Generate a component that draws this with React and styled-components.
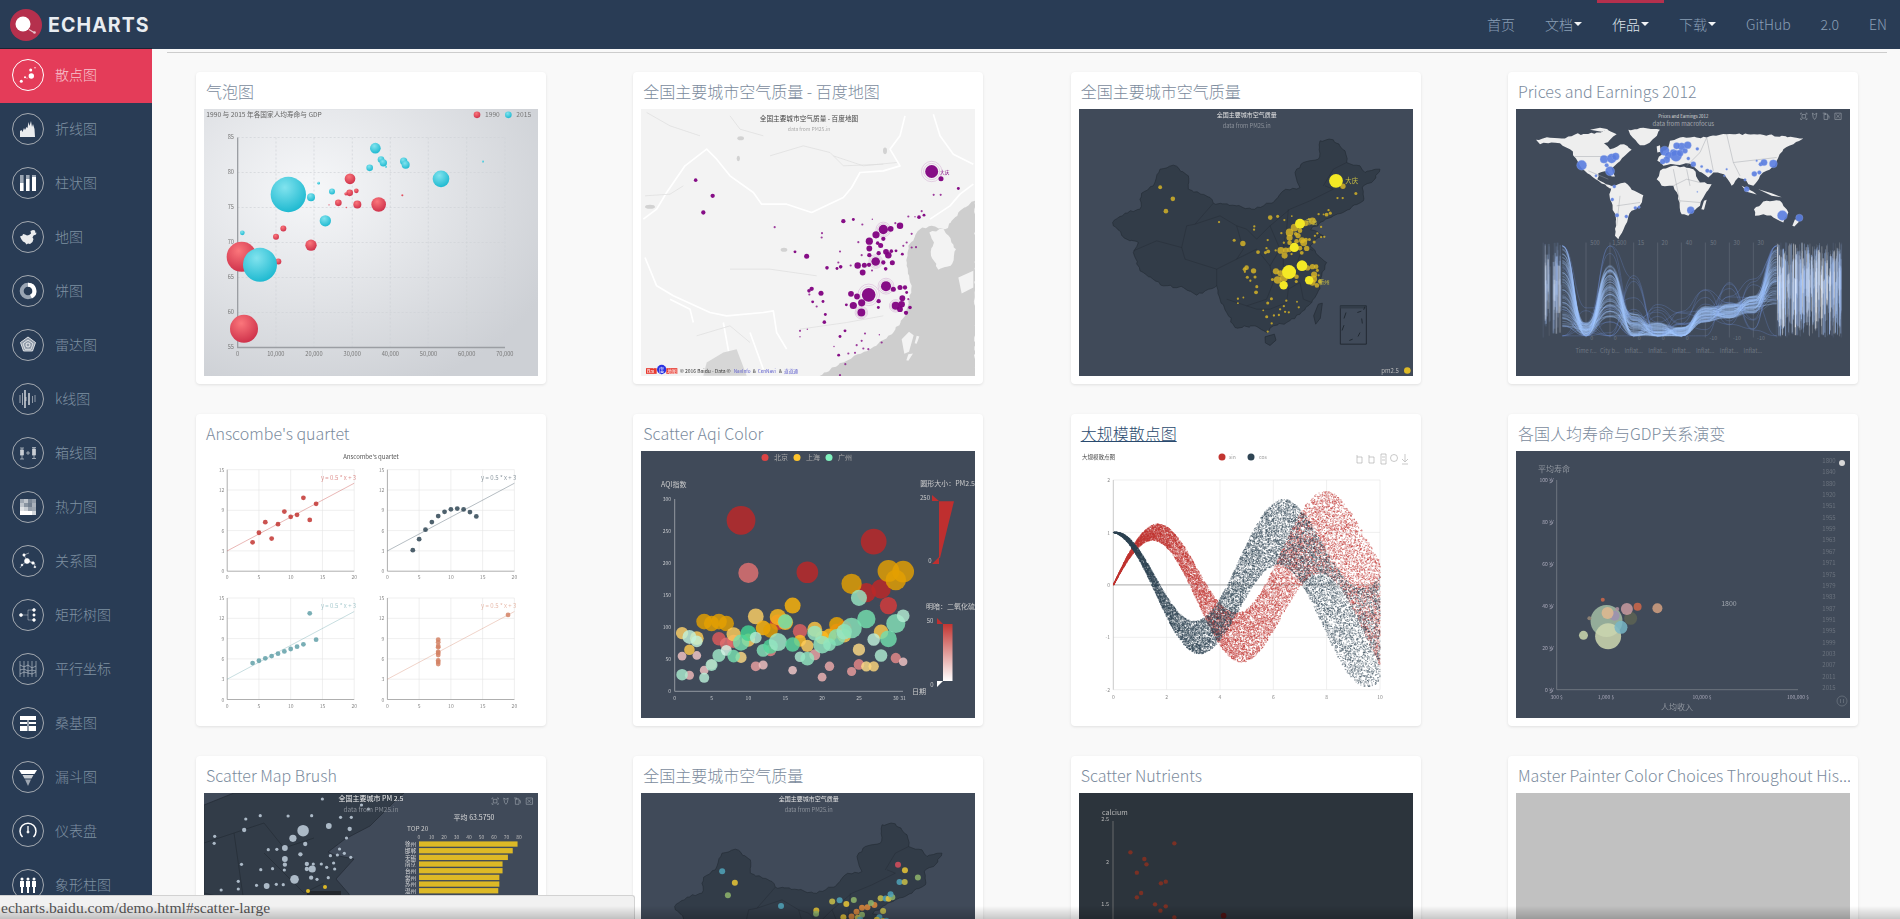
import React from "react";
import styled, { createGlobalStyle } from "styled-components";

const GlobalStyle = createGlobalStyle`
  html, body {
    margin: 0;
    height: 100%;
    overflow: hidden;
    background: #f9f9f9;
    font-family: "Noto Sans CJK SC", "Noto Sans", sans-serif;
  }
`;

const Page = styled.div`
  height: 100vh;
  display: flex;
  flex-direction: column;
  overflow: hidden;
`;

const Navbar = styled.header`
  flex: 0 0 49px;
  display: flex;
  align-items: stretch;
  justify-content: space-between;
  background: #293c55;
`;

const Logo = styled.div`
  display: flex;
  align-items: center;
  gap: 6px;
  padding-left: 10px;
`;

const LogoText = styled.span`
  font-family: "Inter", "Liberation Sans", sans-serif;
  font-size: 19.5px;
  font-weight: 700;
  letter-spacing: 1.1px;
  color: #e9edf1;
`;

const NavLinks = styled.nav`
  display: flex;
`;

const NavLink = styled.a`
  box-sizing: border-box;
  display: flex;
  align-items: center;
  gap: 1px;
  padding: 0 15px 4px;
  height: 49px;
  border-top: 3px solid ${(p) => (p.$active ? "#b5304d" : "transparent")};
  font-size: 14px;
  font-weight: 300;
  color: ${(p) => (p.$active ? "#dfe5eb" : "#8a9fb5")};
  &:last-child {
    padding-right: 13px;
  }
`;

const Caret = styled.i`
  width: 0;
  height: 0;
  border-left: 4px solid transparent;
  border-right: 4px solid transparent;
  border-top: 4px solid #f2f4f6;
`;

const Body = styled.div`
  flex: 1;
  display: flex;
  min-height: 0;
`;

const Sidebar = styled.aside`
  flex: 0 0 152px;
  margin-top: -1px;
  border-top: 1px solid #1b2533;
  background: #293c55;
  overflow: hidden;
`;

const SideItem = styled.div`
  box-sizing: border-box;
  height: 54px;
  display: flex;
  align-items: center;
  gap: 11px;
  padding: 0 0 2px 12px;
  background: ${(p) => (p.$active ? "#e43c59" : "transparent")};
  color: ${(p) => (p.$active ? "#f7c6d0" : "#7f91a2")};
  font-size: 14px;
  font-weight: 300;
`;

const SideLabel = styled.span`
  margin-bottom: 2px;
`;

const IconRing = styled.span`
  box-sizing: border-box;
  width: 32px;
  height: 32px;
  border-radius: 50%;
  border: 1px solid ${(p) => (p.$active ? "#fff" : "#a3a9b0")};
  flex: none;
  svg {
    display: block;
    margin: -1px;
    width: 32px;
    height: 32px;
  }
`;

const Main = styled.main`
  flex: 1;
  min-width: 0;
  overflow: hidden;
`;

const Rule = styled.hr`
  margin: 3px 13px 0 15px;
  border: 0;
  height: 1px;
  background: #cdcdcd;
`;

const Grid = styled.div`
  display: grid;
  grid-template-columns: repeat(4, 350px);
  column-gap: 87.33px;
  row-gap: 30px;
  padding: 19px 0 0 44px;
`;

const Card = styled.article`
  box-sizing: border-box;
  width: 350px;
  height: 312px;
  padding: 0 8px;
  background: #fff;
  border-radius: 4px;
  box-shadow: 0 1px 3px rgba(0, 0, 0, 0.1);
`;

const CardTitle = styled.h3`
  margin: 0;
  height: 37px;
  line-height: 38px;
  padding-left: 2px;
  font-size: 16px;
  font-weight: 300;
  color: ${(p) => (p.$hover ? "#2a4a6e" : "#7b8b9d")};
  text-decoration: ${(p) => (p.$hover ? "underline" : "none")};
  white-space: nowrap;
  overflow: hidden;
`;

// the gallery pictures are scaled-down thumbnails, so they read a little soft
const ChartSvg = styled.svg`
  display: block;
  width: 334px;
  height: 267px;
  background: ${(p) => p.$bg || "#404a59"};
  filter: blur(0.35px);
`;

const Label = styled.text`
  font-family: "Noto Sans CJK SC", "Noto Sans", sans-serif;
  font-size: ${(p) => p.$size || 6}px;
  fill: ${(p) => p.$fill || "#ccc"};
  text-anchor: ${(p) => p.$anchor || "start"};
`;

const StatusBubble = styled.div`
  position: fixed;
  left: 0;
  bottom: 0;
  z-index: 3;
  box-sizing: border-box;
  width: 635px;
  height: 24px;
  padding-left: 1px;
  line-height: 23px;
  font-family: "Liberation Serif", serif;
  font-size: 15.6px;
  color: #555;
  background: #f1f1f1;
  border: 1px solid #d2d2d2;
  border-width: 1px 1px 0 0;
  border-top-right-radius: 3px;
`;

const BottomFade = styled.div`
  position: fixed;
  left: 0;
  right: 0;
  bottom: 0;
  z-index: 4;
  height: 13px;
  pointer-events: none;
  background: linear-gradient(to bottom, rgba(0, 0, 0, 0), rgba(0, 0, 0, 0.2));
`;

// small deterministic random so the picture is the same every load
const seeded = (seed) => () => {
  seed = (seed * 1664525 + 1013904223) % 4294967296;
  return seed / 4294967296;
};

// breaks up a hand traced outline so coasts don't look like straight cuts
const rough = (outline, amp, seed) => {
  const rnd = seeded(seed);
  const nums = outline.match(/-?\d+(\.\d+)?/g).map(Number);
  let d = "";
  for (let i = 0; i < nums.length; i += 2) {
    const x = nums[i];
    const y = nums[i + 1];
    const nx = nums[(i + 2) % nums.length];
    const ny = nums[(i + 3) % nums.length];
    d += `${i ? "L" : "M"}${x} ${y}`;
    const steps = Math.floor(Math.hypot(nx - x, ny - y) / 9);
    for (let s = 1; s < steps; s++) {
      const t = s / steps;
      d += `L${(x + (nx - x) * t + (rnd() - 0.5) * amp).toFixed(1)} ${(y + (ny - y) * t + (rnd() - 0.5) * amp).toFixed(1)}`;
    }
  }
  return d + "Z";
};

/* ---------- sidebar icons, 32x32 ---------- */

const W = "#fff";

const sideIcons = {
  scatter: (
    <g fill={W}>
      <circle cx="19.3" cy="17" r="2.7" />
      <circle cx="18.7" cy="11" r="1.5" />
      <circle cx="23" cy="8.7" r="0.7" />
      <circle cx="9.3" cy="22.3" r="1.5" />
      <circle cx="13" cy="18.3" r="1" />
      <circle cx="15" cy="19" r="0.5" />
    </g>
  ),
  line: (
    <path fill={W} opacity="0.9" d="M8 24v-6l1.500-1 1 2 1.500-4 1 2 1.500-3 1 1 1-6 1 4 1.500-5 1 6 1-3 1.500 5 .5 8z" />
  ),
  bar: (
    <g>
      <path fill="#9aa5b3" d="M8 8h3.600v8H8zM14 8h3.600v4H14zM20 8h4v2h-4z" />
      <path fill={W} d="M8 16h3.600v8H8zM14 12h3.600v12H14zM20 10h4v14h-4z" />
    </g>
  ),
  map: (
    <path fill={W} opacity="0.9" d="M8 15.500l2.500-1 .5-1.500 2 .5 2 1 2-.5 2-1.500-.5-2.500 2.500-1 2 .5.500 2.500 1-.5-.5 2-2.500 1-1 2 1 1.500-1 3-2.500 2-2-.5-1.500 1-1.500-2-2-1-1.500-2z" />
  ),
  pie: (
    <g fill="none" strokeWidth="4">
      <circle cx="16" cy="16" r="6.300" stroke="#9aa5b3" />
      <path stroke={W} d="M16 9.700a6.300 6.300 0 0 1 3 11.900" />
    </g>
  ),
  radar: (
    <g fill="none" stroke={W}>
      <path fill="#8f9aa8" strokeWidth="0.8" d="M16 8l7.500 5.500-3 8.500h-9l-3-8.500z" />
      <path strokeWidth="0.7" d="M16 11l5 3.700-2 5.600h-6l-2-5.600z" />
      <circle cx="16" cy="16" r="2" strokeWidth="0.8" />
    </g>
  ),
  k: (
    <g stroke={W} strokeWidth="0.8">
      <path d="M8 12v8M10.500 10v12M14 14v4" opacity="0.7" />
      <path d="M13 7v18" strokeWidth="1.200" />
      <path d="M17 10v12" strokeWidth="1.200" />
      <path d="M20.500 13v7M23 12v7" opacity="0.6" />
    </g>
  ),
  box: (
    <g fill="#c9ced5" stroke="#c9ced5" strokeWidth="0.7">
      <path fill="none" d="M8 11h4M10 11v11M8 22h4M20 10.500h4M22 10.500v11M20 21.500h4" />
      <rect x="8.500" y="13" width="3" height="5" />
      <rect x="20.500" y="12" width="3" height="6" />
      <path d="M14 16h4M16 14v4" />
    </g>
  ),
  heat: (
    <g fill={W}>
      {[0, 1, 2, 3].map((r) =>
        [0, 1, 2, 3].map((c) => (
          <rect key={`${r}-${c}`} x={8 + c * 4} y={8 + r * 4} width="4" height="4" opacity={[0.55, 0.7, 0.4, 0.5, 0.7, 0.45, 0.35, 0.6, 0.85, 0.75, 0.5, 0.55, 1, 1, 1, 0.8][r * 4 + c]} />
        ))
      )}
    </g>
  ),
  graph: (
    <g fill={W} stroke={W} strokeWidth="0.6">
      <path d="M15 16l-3-6 5-2M15 16l8 3-1 4M15 16l-5 4-2 3M15 16l5 1" fill="none" opacity="0.8" />
      <circle cx="15" cy="16" r="2.500" />
      <circle cx="12" cy="10" r="1.200" />
      <circle cx="21" cy="18" r="1.300" />
      <circle cx="10" cy="20" r="0.900" />
      <circle cx="23" cy="22" r="0.800" />
    </g>
  ),
  tree: (
    <g fill={W} stroke={W} strokeWidth="0.6">
      <path d="M10 16h6M16 11v10M16 11h6M16 21h6" fill="none" opacity="0.6" />
      <circle cx="9" cy="16" r="1.500" />
      <circle cx="22" cy="11" r="1.400" />
      <circle cx="22" cy="16" r="1.200" />
      <circle cx="22" cy="21" r="1.400" />
    </g>
  ),
  parallel: (
    <g stroke="#cfd4da" strokeWidth="0.6" fill="none">
      <path d="M8 8v16M12 8v16M16 8v16M20 8v16M24 8v16" />
      <path d="M8 12l4 2 4-2 4 3 4-2M8 17l4-1 4 2 4-1 4 1M8 21l4-2 4 1 4 1 4-2" />
    </g>
  ),
  sankey: (
    <g fill={W}>
      <path d="M8 9h16v4H8zM8 15h7v2H8zM17 15h7v2h-7zM8 19h7v5H8zM17 19h7v5h-7z" />
      <path d="M15 13h2v11h-2z" opacity="0.5" />
    </g>
  ),
  funnel: (
    <g fill={W}>
      <path d="M7 9h18l-2.500 4h-13z" />
      <path d="M10.500 14h11l-2 3.500h-7z" opacity="0.75" />
      <path d="M13 18.500h6L16 25z" opacity="0.55" />
    </g>
  ),
  gauge: (
    <g fill="none" stroke={W}>
      <path strokeWidth="1.500" d="M10.500 22a8 8 0 1 1 11 0" />
      <path strokeWidth="1.300" d="M16 16v-5" />
      <circle cx="16" cy="17" r="1" fill={W} />
    </g>
  ),
  pictorial: (
    <g fill={W}>
      {[10, 16, 22].map((x) => (
        <g key={x}>
          <circle cx={x} cy="10" r="1.500" />
          <path d={`M${x - 2} 12h4v6h-1v6h-2v-6h-1z`} />
        </g>
      ))}
    </g>
  ),
};

const sideMenu = [
  ["散点图", "scatter"],
  ["折线图", "line"],
  ["柱状图", "bar"],
  ["地图", "map"],
  ["饼图", "pie"],
  ["雷达图", "radar"],
  ["k线图", "k"],
  ["箱线图", "box"],
  ["热力图", "heat"],
  ["关系图", "graph"],
  ["矩形树图", "tree"],
  ["平行坐标", "parallel"],
  ["桑基图", "sankey"],
  ["漏斗图", "funnel"],
  ["仪表盘", "gauge"],
  ["象形柱图", "pictorial"],
];

/* ---------- shared chart bits ---------- */

// city dots, coords taken off the baidu thumbnail at 3x: x, y, r
const cities = [
  [905, 307, 18], [933, 329, 7], [985, 358, 4], [911, 377, 3], [932, 377, 3], [197, 333, 5], [248, 380, 6], [220, 430, 6],
  [434, 474, 3], [640, 456, 6], [670, 451, 4], [697, 466, 3], [727, 450, 2], [760, 481, 13], [782, 479, 8], [810, 470, 9],
  [738, 497, 10], [760, 509, 6], [718, 516, 10], [743, 522, 5], [752, 529, 7], [685, 519, 3], [718, 538, 8], [718, 558, 6],
  [746, 552, 6], [768, 548, 8], [775, 558, 9], [784, 546, 5], [798, 545, 4], [817, 555, 4], [830, 520, 3], [845, 535, 3],
  [737, 577, 12], [683, 589, 9], [703, 588, 7], [717, 587, 6], [760, 580, 6], [787, 581, 7], [698, 610, 8], [767, 599, 5],
  [591, 596, 5], [621, 598, 4], [632, 593, 5], [625, 580, 3], [662, 589, 3], [695, 558, 3], [576, 492, 3], [575, 505, 3],
  [495, 548, 4], [530, 561, 7], [630, 547, 3], [545, 659, 6], [537, 665, 5], [573, 672, 7], [538, 676, 3], [548, 698, 4],
  [560, 712, 3], [579, 697, 4], [716, 677, 19], [768, 651, 14], [663, 674, 8], [681, 682, 8], [695, 701, 10], [670, 709, 10],
  [694, 730, 11], [649, 707, 4], [746, 696, 6], [745, 715, 4], [797, 710, 11], [817, 687, 8], [815, 705, 9], [810, 720, 8],
  [828, 731, 6], [840, 715, 5], [790, 660, 7], [810, 655, 7], [825, 655, 6], [830, 670, 4], [835, 690, 3], [586, 736, 4],
  [583, 759, 5], [645, 785, 4], [630, 802, 4], [705, 793, 3], [748, 797, 2], [755, 820, 3], [695, 815, 3], [680, 828, 3],
  [700, 838, 3], [715, 840, 3], [612, 832, 2], [626, 858, 4], [655, 853, 3], [675, 851, 3], [646, 885, 3], [630, 918, 3],
  [510, 785, 3], [532, 780, 2], [510, 803, 2], [835, 442, 3], [855, 443, 2], [867, 444, 5], [882, 438, 4], [875, 426, 3],
  [845, 494, 3], [858, 534, 3], [820, 530, 3], [796, 462, 3], [726, 604, 3],
];

const toMapX = (x) => 798 + (x - 905) * 0.745;
const toMapY = (y) => 335 + (y - 307) * 0.74;

const chinaOutline = rough(
  "M128 460L165 432 210 420 215 372 250 350 270 300 310 288 355 320 355 360 420 385 430 402 500 410 545 420 610 400 640 365 690 355 675 310 700 280 745 270 750 215 790 212 825 245 830 280 870 290 885 310 930 300 905 340 880 350 880 395 840 420 790 440 750 460 722 482 760 500 735 512 720 530 745 560 770 580 755 620 745 665 725 700 690 735 650 760 610 770 590 790 555 770 495 775 470 730 450 690 440 650 380 678 340 655 280 650 210 605 190 550 205 520 170 510 130 470Z",
  7,
  21
);
const provinceLines =
  "M190 545L260 515 335 535 345 570 440 600 440 650M335 535L350 470 375 465 430 402M375 465L450 440 500 470 530 480M530 480L560 510 600 470 660 420 720 395 790 360 765 350M600 470L630 540 600 590 610 640 590 690 530 710 470 690M440 600L500 570 560 540 600 590M655 420L650 480 640 530 640 590 655 660 690 640 700 690 725 700M640 530L700 530 730 545M655 660L650 700 600 720 560 720 530 710M760 350L790 300 830 280M700 530L680 585 745 600M500 470L520 540 500 570";

const ChinaMap = () => (
  <g>
    <path d={chinaOutline} fill="#323c48" stroke="#222a33" strokeWidth="1.800" />
    <path d={provinceLines} fill="none" stroke="#222a33" strokeWidth="1.300" />
    <path d="M745 705l12-3-6 45-14 18-6-25z" fill="#323c48" stroke="#222a33" strokeWidth="2" />
    <path d="M585 803l28-8 5 18-18 16-14-8z" fill="#323c48" stroke="#222a33" strokeWidth="2" />
    <path d="M811 710h78v115h-78z" fill="none" stroke="#222a33" strokeWidth="3" />
    <path d="M811 710h78v8h-78z" fill="#323c48" />
    <path d="M828 730l-6 18M822 768l-6 16M862 730l12-4M875 748l2 15M870 790l-6 12M848 810l-10 4M885 712l-4 10" stroke="#222a33" strokeWidth="3" />
  </g>
);

const ToolIcons = ({ x, y, s = 1, color = "#aab0b8" }) => (
  <g transform={`translate(${x} ${y}) scale(${s})`} fill="none" stroke={color} strokeWidth="0.6">
    <path d="M0 0h1.500M5.500 0h1.500v1.500M7 5.500V7H5.500M1.500 7H0V5.500M0 1.500V0M1.500 1.500l4 0 0 4-4 0z" />
    <path d="M13 0l2.500 1.500L18 0l-1 5-1.500 2L14 5z" />
    <path d="M26 1h4v6h-4zM24.500 0h3v2M30 3h1.500v3" />
    <path d="M38 0h7v7h-7zM39.500 1.500l4 4M43.500 1.500l-4 4" />
  </g>
);

/* ---------- row 1 ---------- */

const redBubbles = [
  [155, 563, 45], [162, 779, 42], [363, 528, 17], [265, 577, 9], [258, 503, 9], [280, 478, 9], [480, 329, 16], [479, 371, 10],
  [468, 374, 5], [499, 365, 7], [445, 401, 10], [502, 406, 12], [566, 406, 22], [417, 407, 2], [469, 415, 2], [637, 378, 3],
];
const cyanBubbles = [
  [210, 587, 51], [295, 376, 53], [363, 384, 12], [157, 491, 7], [406, 455, 17], [386, 342, 4], [426, 367, 9], [539, 296, 10],
  [556, 237, 16], [573, 271, 10], [580, 281, 11], [588, 293, 3], [641, 276, 11], [647, 287, 12], [753, 329, 25], [879, 277, 3],
];

const BubbleChart = () => (
  <ChartSvg viewBox="42 120 1002 800" $bg="#cdd0d5">
    <defs>
      <radialGradient id="bubbleBg" cx="0.32" cy="0.3" r="0.8">
        <stop offset="0" stopColor="#f6f7f9" />
        <stop offset="1" stopColor="#cdd0d5" />
      </radialGradient>
      <radialGradient id="redBall" cx="0.4" cy="0.3" r="0.75">
        <stop offset="0" stopColor="#fb767b" />
        <stop offset="1" stopColor="#cc2e48" />
      </radialGradient>
      <radialGradient id="cyanBall" cx="0.4" cy="0.3" r="0.75">
        <stop offset="0" stopColor="#81e3ee" />
        <stop offset="1" stopColor="#19b7cf" />
      </radialGradient>
    </defs>
    <rect x="42" y="120" width="1002" height="800" fill="url(#bubbleBg)" />
    <g stroke="#cfd1d6" strokeWidth="2" strokeDasharray="6 6">
      {[205, 310, 415, 520, 625, 730].map((y) => (
        <path key={y} d={`M143 ${y}H945`} />
      ))}
      {[258, 372, 487, 601, 715, 830, 945].map((x) => (
        <path key={x} d={`M${x} 205V835`} />
      ))}
    </g>
    <path d="M143 205V835H945" fill="none" stroke="#9b9ea3" strokeWidth="4" />
    {[85, 80, 75, 70, 65, 60, 55].map((v, i) => (
      <Label key={v} x="132" y={211 + i * 105} $size={17} $fill="#777" $anchor="end">{v}</Label>
    ))}
    {[0, 10000, 20000, 30000, 40000, 50000, 60000, 70000].map((v, i) => (
      <Label key={v} x={143 + i * 114.500} y="862" $size={17} $fill="#777" $anchor="middle">
        {v.toLocaleString("en-US")}
      </Label>
    ))}
    <Label x="49" y="145" $size={20} $fill="#666">1990 与 2015 年各国家人均寿命与 GDP</Label>
    <circle cx="861" cy="137" r="10" fill="url(#redBall)" />
    <Label x="885" y="144" $size={20} $fill="#777">1990</Label>
    <circle cx="955" cy="137" r="10" fill="url(#cyanBall)" />
    <Label x="979" y="144" $size={20} $fill="#777">2015</Label>
    {redBubbles.map(([x, y, r], i) => (
      <circle key={i} cx={x} cy={y} r={r} fill="url(#redBall)" />
    ))}
    {cyanBubbles.map(([x, y, r], i) => (
      <circle key={i} cx={x} cy={y} r={r} fill="url(#cyanBall)" />
    ))}
  </ChartSvg>
);

const baiduWater = rough(
  "M1035 395L985 430 945 480 905 470 870 480 835 530 830 590 845 650 830 730 790 790 720 840 640 880 560 925L1035 925Z",
  7,
  31
);
const baiduKorea = rough("M898 490L940 478 978 540 962 590 925 602 903 560 912 520Z", 7, 33);

const BaiduMap = () => (
  <ChartSvg viewBox="33 120 1002 800" $bg="#f3f3f3">
    <path fill="#cecece" d={baiduWater} />
    <path fill="#f3f3f3" d={baiduKorea} />
    <path fill="#f3f3f3" d="M815 810l22-22 14 10-14 50-14 6zM985 625l45-20v50l-35 18zM860 800l8 2-8 22-6-2zM835 855l14-2-14 22-6-2z" />
    <g fill="none" stroke="#fff" strokeWidth="5" strokeLinejoin="round">
      <path d="M40 450L80 420 110 370 165 290 230 240 260 270 300 320 370 370 395 405 470 405 545 430 640 385 665 355 690 310 760 305 810 290 780 240 810 200 825 140" />
      <path d="M910 135L930 200 970 255 1030 285" />
      <path d="M45 565L80 650 130 680 240 730 290 740 400 730 430 725 440 790 470 840" />
      <path d="M120 690L180 720 190 760M1030 345L990 375 960 410 900 450M280 760L300 870M360 790L400 900" />
    </g>
    <g fill="none" stroke="#dcdcdc" strokeWidth="2">
      <path d="M45 380L120 375 160 350M300 140L330 180 400 200M420 260L520 230 600 250 640 290 760 285M300 600L420 600 560 620M200 800L300 770 360 820M510 780L650 760 760 740M50 130L120 170 210 200M610 260L700 290 800 280" />
    </g>
    <g fill="#d2d2d2">
      <ellipse cx="332" cy="207" rx="10" ry="6" />
      <ellipse cx="60" cy="413" rx="15" ry="6" />
      <ellipse cx="462" cy="542" rx="10" ry="6" />
      <ellipse cx="325" cy="268" rx="5" ry="8" />
      <ellipse cx="765" cy="245" rx="6" ry="10" />
    </g>
    <path d="M230 880L280 850 320 840 350 920H220Z" fill="#d6d6d6" />
    {cities.map(([x, y, r], i) => (
      <g key={i}>
        {r >= 11 && (
          <g fill="none" stroke="#800080" opacity="0.3">
            <circle cx={x} cy={y} r={r * 1.35} strokeWidth="1.500" />
            <circle cx={x} cy={y} r={r * 1.7} strokeWidth="1.500" />
          </g>
        )}
        <circle cx={x} cy={y} r={r * 1.08} fill="#800080" opacity={r < 4 ? 0.75 : 0.95} />
      </g>
    ))}
    <Label x="537" y="157" $size={20} $fill="#444" $anchor="middle">全国主要城市空气质量 - 百度地图</Label>
    <Label x="537" y="187" $size={15} $fill="#aaa" $anchor="middle">data from PM25.in</Label>
    <Label x="930" y="314" $size={14} $fill="#800080">大庆</Label>
    <rect x="48" y="897" width="32" height="17" fill="#e8392f" />
    <Label x="51" y="912" $size={15} $fill="#fff">Bai</Label>
    <circle cx="95" cy="901" r="14" fill="#2932e1" />
    <Label x="95" y="909" $size={16} $fill="#fff" $anchor="middle">度</Label>
    <rect x="109" y="897" width="33" height="17" fill="#e8392f" />
    <Label x="112" y="911" $size={14} $fill="#fff">地图</Label>
    <Label x="149" y="912" $size={15} $fill="#333">© 2016 Baidu - Data ©</Label>
    <Label x="311" y="912" $size={14} $fill="#5c5ccc">NavInfo</Label>
    <Label x="368" y="912" $size={14} $fill="#333">&amp;</Label>
    <Label x="383" y="912" $size={14} $fill="#5c5ccc">CenNavi</Label>
    <Label x="447" y="912" $size={14} $fill="#333">&amp;</Label>
    <Label x="462" y="912" $size={14} $fill="#5c5ccc">道道通</Label>
  </ChartSvg>
);

const AirMap = () => (
  <ChartSvg viewBox="27 120 1002 800">
    <ChinaMap />
    {cities.map(([x, y, r], i) =>
      r >= 11 ? null : (
        <circle key={i} cx={toMapX(x)} cy={toMapY(y)} r={Math.max(2.800, r * 1.15)} fill="#ddb926" opacity="0.8" />
      )
    )}
    {cities
      .filter((c) => c[2] >= 11)
      .map(([x, y, r], i) => (
        <circle key={i} cx={toMapX(x)} cy={toMapY(y)} r={Math.min(21, r * 1.15)} fill="#f4e925" />
      ))}
    <Label x="530" y="143" $size={18} $fill="#e4e4e4" $anchor="middle">全国主要城市空气质量</Label>
    <Label x="530" y="177" $size={17} $fill="#8c929b" $anchor="middle">data from PM25.in</Label>
    <Label x="826" y="342" $size={19} $fill="#c9be42">大庆</Label>
    <Label x="708" y="464" $size={17} $fill="#c9be42">邢台</Label>
    <Label x="745" y="646" $size={17} $fill="#c9be42">衢州</Label>
    <Label x="934" y="911" $size={18} $fill="#bbb">pm2.5</Label>
    <circle cx="1012" cy="904" r="10" fill="#ddb926" />
  </ChartSvg>
);

// parallel lines follow a loose band; a few outliers wander off it
const parallelAxes = [187, 258, 330, 401, 473, 544, 616, 688, 760, 830];
const parallelMean = [650, 782, 665, 770, 785, 790, 735, 725, 705, 620];
const parallelSpread = [125, 20, 80, 38, 26, 16, 24, 22, 26, 85];

const buildParallel = () => {
  const rnd = seeded(42);
  const paths = [];
  for (let n = 0; n < 120; n++) {
    const outlier = n % 10 === 0;
    const pts = parallelAxes.map((x, i) => {
      const spread = parallelSpread[i] * (outlier ? 4 : 1);
      return [x, Math.min(800, Math.max(530, parallelMean[i] + (rnd() - 0.5) * 2 * spread))];
    });
    let d = `M${pts[0][0]} ${pts[0][1]}`;
    for (let i = 1; i < pts.length; i++) {
      const mid = (pts[i][0] + pts[i - 1][0]) / 2;
      d += `C${mid} ${pts[i - 1][1]} ${mid} ${pts[i][1]} ${pts[i][0]} ${pts[i][1]}`;
    }
    paths.push({ d, faint: outlier });
  }
  return paths;
};

const buildStreaks = (x0, x1, count, seed) => {
  const rnd = seeded(seed);
  const out = [];
  for (let i = 0; i < count; i++) {
    const x = x0 + rnd() * (x1 - x0);
    const top = 520 + rnd() * 130;
    out.push({ x, top, bottom: 640 + rnd() * 165, w: 0.8 + rnd() * 2.200, o: 0.2 + rnd() * 0.6 });
  }
  return out;
};

const parallelLines = buildParallel();
const rightStreaks = buildStreaks(832, 1024, 320, 7);
const leftStreaks = [
  ...buildStreaks(133, 150, 24, 11),
  ...buildStreaks(160, 183, 30, 12),
];

const continents = [
  "M108 212L150 206 185 208 225 196 290 190 320 180 350 195 330 212 312 222 330 240 352 232 372 225 395 242 372 262 352 282 335 298 345 322 335 322 322 306 295 312 292 330 318 345 345 357 330 358 295 335 262 312 240 290 228 268 210 240 180 222 145 222 120 225Z",
  "M385 182L430 176 480 182 465 205 440 225 420 228 398 205Z",
  "M335 350L375 340 395 362 430 378 420 408 395 425 375 470 355 510 345 500 348 450 335 400 328 375Z",
  "M480 305L520 290 580 300 600 340 635 345 610 385 600 410 565 440 545 435 535 380 520 350 485 350 470 330Z",
  "M472 275L490 245 505 235 510 215 540 205 570 205 620 205 680 195 780 195 910 208 880 225 850 240 835 265 825 290 800 305 780 320 760 350 745 345 735 330 715 325 695 350 672 315 640 310 625 325 590 300 575 285 520 285 490 290Z",
  "M762 420L800 395 840 395 865 430 850 460 820 445 790 435 765 440Z",
].map((d, i) => rough(d, 6, 50 + i));

const smallLand =
  "M612 395l8-3-8 30-8-2zM470 232l10-4 2 20-10 2zM725 350l35 18 10 8-30-8zM775 360l40 12 30 12-30-4zM812 265l6 4-6 22-16 10-4-6zM885 450l12 8-14 14-6-2zM270 182l30-6 25 4-20 8z";
const countryLines =
  "M225 262L345 262M265 305L325 330M520 350L560 330 600 340M520 300L530 350 540 400M560 300L570 350M540 395L600 400M620 205L640 305M680 195L700 280 720 320M700 280L830 265M350 410L420 400M360 380L350 470M560 290L600 250 620 205";

const worldBubbles = [
  [245, 288, 15], [312, 270, 12], [335, 268, 14], [347, 262, 11], [330, 306, 14], [320, 288, 6], [288, 320, 4], [343, 352, 5],
  [337, 391, 5], [351, 438, 6], [379, 442, 5], [406, 416, 5], [417, 414, 4], [494, 245, 14], [520, 250, 10], [528, 260, 17],
  [505, 258, 10], [545, 232, 11], [530, 230, 10], [563, 228, 11], [540, 252, 10], [555, 245, 8], [500, 272, 10], [488, 277, 8],
  [592, 239, 5], [565, 268, 5], [580, 285, 8], [605, 292, 4], [622, 305, 6], [632, 307, 5], [680, 300, 3], [673, 320, 3],
  [572, 423, 11], [592, 368, 2], [740, 360, 8], [735, 332, 4], [763, 314, 8], [778, 310, 6], [782, 285, 6], [792, 280, 10],
  [820, 284, 12], [770, 275, 3], [847, 439, 15], [898, 446, 11],
];

const PricesChart = () => (
  <ChartSvg viewBox="48 120 1002 800">
    <defs>
      <filter id="streakBlur">
        <feGaussianBlur stdDeviation="1.400" />
      </filter>
    </defs>
    <g fill="#eeeeee">
      {continents.map((d, i) => (
        <path key={i} d={d} />
      ))}
      <path d={smallLand} />
    </g>
    <path d={countryLines} fill="none" stroke="#9a9fa6" strokeWidth="1.300" />
    {worldBubbles.map(([x, y, r], i) => (
      <circle key={i} cx={x} cy={y} r={r} fill="#5a7de0" opacity="0.9" stroke="#a9bdf2" strokeWidth="0.800" />
    ))}
    <Label x="550" y="148" $size={13} $fill="#ddd" $anchor="middle">Prices and Earnings 2012</Label>
    <Label x="550" y="170" $size={18} $fill="#a0a5ac" $anchor="middle">data from macrofocus</Label>
    <ToolIcons x={902} y={132} s={2.700} />
    <g stroke="#6c7480" strokeWidth="1.500">
      {parallelAxes.slice(1, 9).map((x) => (
        <path key={x} d={`M${x} 520V805`} />
      ))}
    </g>
    {[
      [285, "500"], [358, "1,500"], [423, "15"], [494, "20"], [567, "40"], [640, "50"], [710, "30"], [782, "30"],
    ].map(([x, t]) => (
      <Label key={x} x={x} y="528" $size={17} $fill="#6f7783" $anchor="middle">{t}</Label>
    ))}
    {[
      [275, "0"], [346, "0"], [418, "0"], [490, "0"], [562, "0"], [640, "-10"], [711, "-10"], [783, "-10"],
    ].map(([x, t]) => (
      <Label key={x} x={x} y="814" $size={16} $fill="#6f7783" $anchor="middle">{t}</Label>
    ))}
    {["Time r...", "City b...", "Inflat...", "Inflat...", "Inflat...", "Inflat...", "Inflat...", "Inflat..."].map((t, i) => (
      <Label key={i} x={258 + i * 71.500} y="851" $size={17} $fill="#6f7783" $anchor="middle">{t}</Label>
    ))}
    <g fill="none">
      {parallelLines.map((l, i) => (
        <path key={i} d={l.d} stroke={l.faint ? "#6d8fd6" : "#a6c8ff"} strokeWidth={l.faint ? 1.500 : 1.200} opacity={l.faint ? 0.55 : 0.42} />
      ))}
    </g>
    <g filter="url(#streakBlur)">
      {[...leftStreaks, ...rightStreaks].map((s, i) => (
        <path key={i} d={`M${s.x} ${s.top}V${s.bottom}`} stroke={i % 3 ? "#a9c9ff" : "#fff"} strokeWidth={s.w} opacity={s.o} />
      ))}
    </g>
    <path d="M830 520V805M842 520V805M860 520V805M1000 520V805M1024 520V805M130 520V805" stroke="#8da3c9" strokeWidth="1" opacity="0.5" />
  </ChartSvg>
);

/* ---------- row 2 ---------- */

const anscombe = [
  { c: "#c23531", x: [10, 8, 13, 9, 11, 14, 6, 4, 12, 7, 5], y: [8.04, 6.95, 7.58, 8.81, 8.33, 9.96, 7.24, 4.26, 10.84, 4.82, 5.68] },
  { c: "#2f4554", x: [10, 8, 13, 9, 11, 14, 6, 4, 12, 7, 5], y: [9.14, 8.14, 8.74, 8.77, 9.26, 8.1, 6.13, 3.1, 9.13, 7.26, 4.74] },
  { c: "#61a0a8", x: [10, 8, 13, 9, 11, 14, 6, 4, 12, 7, 5], y: [7.46, 6.77, 12.74, 7.11, 7.81, 8.84, 6.08, 5.39, 8.15, 6.42, 5.73] },
  { c: "#d48265", x: [8, 8, 8, 8, 8, 8, 8, 19, 8, 8, 8], y: [6.58, 5.76, 7.71, 8.84, 8.47, 7.04, 5.25, 12.5, 5.56, 7.91, 6.89] },
];

const AnscombeGrid = ({ left, top, series }) => {
  const w = 127;
  const h = 101.500;
  const px = (v) => left + (v / 20) * w;
  const py = (v) => top + h - (v / 15) * h;
  return (
    <g>
      <g stroke="#e4e4e4" strokeWidth="0.600">
        {[3, 6, 9, 12, 15].map((v) => (
          <path key={v} d={`M${left} ${py(v)}H${left + w}`} />
        ))}
        {[5, 10, 15, 20].map((v) => (
          <path key={v} d={`M${px(v)} ${top}V${top + h}`} />
        ))}
      </g>
      <path d={`M${left} ${top}V${top + h}H${left + w}`} fill="none" stroke="#8c8c8c" strokeWidth="0.700" />
      {[0, 3, 6, 9, 12, 15].map((v) => (
        <Label key={v} x={left - 3} y={py(v) + 2} $size={5} $fill="#888" $anchor="end">{v}</Label>
      ))}
      {[0, 5, 10, 15, 20].map((v) => (
        <Label key={v} x={px(v)} y={top + h + 8} $size={5} $fill="#888" $anchor="middle">{v}</Label>
      ))}
      <path d={`M${px(0)} ${py(3)}L${px(20)} ${py(13)}`} stroke={series.c} strokeWidth="0.700" opacity="0.5" />
      <Label x={left + w + 2} y={py(13.500)} $size={6} $fill={series.c} $anchor="end" opacity="0.55">y = 0.5 * x + 3</Label>
      {series.x.map((x, i) => (
        <circle key={i} cx={px(x)} cy={py(series.y[i])} r="2.400" fill={series.c} opacity="0.85" />
      ))}
    </g>
  );
};

const AnscombeChart = () => (
  <ChartSvg viewBox="0 0 334 267" $bg="#fff">
    <Label x="167" y="8" $size={6} $fill="#555" $anchor="middle">Anscombe's quartet</Label>
    <AnscombeGrid left={23.200} top={18.700} series={anscombe[0]} />
    <AnscombeGrid left={183.400} top={18.700} series={anscombe[1]} />
    <AnscombeGrid left={23.200} top={147} series={anscombe[2]} />
    <AnscombeGrid left={183.400} top={147} series={anscombe[3]} />
  </ChartSvg>
);

// day, aqi, pm2.5, so2
const aqiBJ = [
  [1, 55, 9, 6], [2, 25, 11, 9], [3, 56, 7, 5], [4, 33, 7, 6], [5, 42, 24, 16], [6, 82, 58, 33], [7, 74, 49, 27], [8, 78, 55, 29],
  [9, 267, 216, 64], [10, 185, 127, 27], [11, 39, 19, 15], [12, 41, 11, 7], [13, 64, 38, 22], [14, 108, 79, 41], [15, 108, 63, 26],
  [16, 33, 6, 5], [17, 94, 66, 31], [18, 186, 142, 79], [19, 57, 31, 14], [20, 22, 8, 10], [21, 39, 15, 13], [22, 94, 69, 39],
  [23, 99, 73, 48], [24, 31, 12, 16], [25, 42, 27, 22], [26, 154, 117, 58], [27, 234, 185, 69], [28, 160, 120, 50], [29, 134, 96, 41],
  [30, 52, 24, 21], [31, 46, 5, 6],
];
const aqiSH = [
  [1, 91, 45, 23], [2, 65, 27, 29], [3, 83, 60, 27], [4, 109, 81, 51], [5, 106, 77, 51], [6, 109, 81, 51], [7, 106, 77, 51], [8, 89, 65, 26],
  [9, 53, 33, 17], [10, 80, 55, 24], [11, 117, 81, 24], [12, 99, 71, 42], [13, 95, 69, 50], [14, 116, 87, 40], [15, 108, 80, 37],
  [16, 134, 83, 43], [17, 79, 43, 37], [18, 71, 46, 25], [19, 97, 71, 31], [20, 84, 57, 31], [21, 87, 63, 41], [22, 104, 77, 48],
  [23, 87, 62, 28], [24, 168, 128, 56], [25, 65, 45, 17], [26, 39, 24, 17], [27, 39, 24, 19], [28, 93, 68, 29], [29, 188, 143, 51],
  [30, 174, 131, 50], [31, 187, 143, 53],
];
const aqiGZ = [
  [1, 26, 37, 13], [2, 85, 62, 8], [3, 78, 38, 7], [4, 21, 21, 9], [5, 41, 42, 13], [6, 56, 52, 16], [7, 64, 30, 2], [8, 55, 48, 26],
  [9, 76, 85, 27], [10, 91, 81, 40], [11, 84, 39, 11], [12, 64, 51, 23], [13, 70, 69, 36], [14, 77, 105, 16], [15, 109, 68, 29],
  [16, 73, 68, 34], [17, 54, 27, 12], [18, 51, 61, 19], [19, 91, 71, 18], [20, 73, 102, 19], [21, 73, 50, 20], [22, 84, 94, 24],
  [23, 93, 77, 18], [24, 99, 130, 22], [25, 146, 84, 18], [26, 113, 108, 27], [27, 81, 48, 8], [28, 56, 48, 12], [29, 82, 92, 28],
  [30, 106, 116, 23], [31, 118, 50, 11],
];

const aqiDots = (data, hue, sat) =>
  data.map(([day, aqi, pm, so2], i) => {
    const light = 92 - (Math.min(so2, 50) / 50) * 47;
    return (
      <circle
        key={i}
        cx={33.700 + day * 7.370}
        cy={240.300 - aqi * 0.640}
        r={(10 + (pm / 250) * 30) * 0.400}
        fill={`hsl(${hue} ${sat}% ${light}%)`}
        opacity="0.82"
      />
    );
  });

const AqiChart = () => (
  <ChartSvg viewBox="0 0 334 267">
    <defs>
      <linearGradient id="aqiRamp" x1="0" y1="0" x2="0" y2="1">
        <stop offset="0" stopColor="#c23531" />
        <stop offset="1" stopColor="#fff" />
      </linearGradient>
    </defs>
    <circle cx="124" cy="6.500" r="3.500" fill="#dd4444" />
    <Label x="133" y="9" $size={7} $fill="#aaa">北京</Label>
    <circle cx="156" cy="6.500" r="3.500" fill="#fec42c" />
    <Label x="165" y="9" $size={7} $fill="#aaa">上海</Label>
    <circle cx="188" cy="6.500" r="3.500" fill="#80f1be" />
    <Label x="197" y="9" $size={7} $fill="#aaa">广州</Label>
    <Label x="20" y="36" $size={7} $fill="#ccc">AQI指数</Label>
    <path d="M33.700 48V240.300H262" fill="none" stroke="#b6bac0" strokeWidth="0.700" />
    {[0, 50, 100, 150, 200, 250, 300].map((v) => (
      <Label key={v} x="30" y={242.300 - v * 0.640} $size={5} $fill="#c6c9cd" $anchor="end">{v}</Label>
    ))}
    {[0, 5, 10, 15, 20, 25, 30].map((v) => (
      <Label key={v} x={33.700 + v * 7.370} y="249" $size={5} $fill="#c6c9cd" $anchor="middle">{v}</Label>
    ))}
    <Label x="262" y="249" $size={5} $fill="#c6c9cd" $anchor="middle">31</Label>
    <Label x="271" y="243" $size={7} $fill="#ccc">日期</Label>
    {aqiDots(aqiBJ, 0, 66)}
    {aqiDots(aqiSH, 42, 99)}
    {aqiDots(aqiGZ, 153, 62)}
    <Label x="334" y="35" $size={7} $fill="#ccc" $anchor="end">圆形大小：PM2.5</Label>
    <Label x="284" y="49" $size={6} $fill="#ccc" $anchor="middle">250</Label>
    <path d="M298 50.300H313L299 107H298Z" fill="#bf2f2f" />
    <path d="M291 44l7 6h-7zM291 113l7-7v7z" fill="#bf2f2f" />
    <Label x="289" y="112" $size={6} $fill="#ccc" $anchor="middle">0</Label>
    <Label x="334" y="158" $size={7} $fill="#ccc" $anchor="end">明暗：二氧化硫</Label>
    <Label x="289" y="172" $size={6} $fill="#ccc" $anchor="middle">50</Label>
    <rect x="302" y="173" width="9.500" height="57" fill="url(#aqiRamp)" />
    <path d="M296 167l6 6h-6z" fill="#bf2f2f" />
    <path d="M296 236l6-6h-6z" fill="#fff" />
    <Label x="291" y="236" $size={6} $fill="#ccc" $anchor="middle">0</Label>
  </ChartSvg>
);

const largePoints = (fn, seed) => {
  const rnd = seeded(seed);
  let d = "";
  for (let i = 0; i < 14000; i++) {
    const x = rnd() * 10;
    const y = fn(x) - x * (i % 2 ? 0.1 : -0.1) * rnd();
    const px = 34.300 + x * 26.670;
    const py = 133.900 - y * 52.400;
    if (py < 238.700) d += `M${px.toFixed(1)} ${py.toFixed(1)}h.3`;
  }
  return d;
};

const sinPath = largePoints(Math.sin, 5);
const cosPath = largePoints(Math.cos, 9);

const LargeScatter = () => (
  <ChartSvg viewBox="0 0 334 267" $bg="#fff">
    <Label x="3" y="8" $size={5.500} $fill="#444">大规模散点图</Label>
    <circle cx="143" cy="6" r="3.500" fill="#c23531" />
    <Label x="150" y="8" $size={5} $fill="#999">sin</Label>
    <circle cx="172" cy="6" r="3.500" fill="#2f4554" />
    <Label x="180" y="8" $size={5} $fill="#999">cos</Label>
    <g fill="none" stroke="#a4a4a4" strokeWidth="0.600">
      <path d="M278 4v8h5V6h-5M290 4v8h5V6h-5" />
      <path d="M302 3h5v10h-5zM303 6h3M303 9h3" />
      <circle cx="315" cy="7" r="3.500" />
      <path d="M326 3v7M323 8l3 3 3-3M323 13h6" />
    </g>
    <g stroke="#e4e4e4" strokeWidth="0.600">
      {[29, 81.400, 186.300, 238.700].map((y) => (
        <path key={y} d={`M34.300 ${y}H301`} />
      ))}
      {[87.600, 141, 194.300, 247.600, 301].map((x) => (
        <path key={x} d={`M${x} 29V238.700`} />
      ))}
    </g>
    <path d="M34.300 29V238.700" stroke="#bbb" strokeWidth="0.800" />
    <path d="M34.300 133.900H301" stroke="#bbb" strokeWidth="1.300" />
    {[2, 1, 0, -1, -2].map((v) => (
      <Label key={v} x="31" y={135.900 - v * 52.400} $size={5} $fill="#888" $anchor="end">{v}</Label>
    ))}
    {[0, 2, 4, 6, 8, 10].map((v) => (
      <Label key={v} x={34.300 + v * 26.670} y="248" $size={5} $fill="#888" $anchor="middle">{v}</Label>
    ))}
    <path d={sinPath} fill="none" stroke="#c23531" strokeWidth="0.700" strokeLinecap="round" opacity="0.75" />
    <path d={cosPath} fill="none" stroke="#2f4554" strokeWidth="0.700" strokeLinecap="round" opacity="0.75" />
  </ChartSvg>
);

const lifeBubbles = [
  [1020, 636, 16, "#a3bda5"], [1023, 682, 13, "#cfd8b0"], [1047, 655, 6.500, "#78b6c6"], [1065, 628, 6.500, "#5d6353"], [1035, 620, 5, "#9e8fb0"],
  [1022, 612, 6, "#e0b98f"], [1058, 600, 6, "#c99aa0"], [1078, 593, 4, "#d0674a"], [1115, 598, 5, "#d3a080"], [977, 679, 4.500, "#cdd8ae"],
  [1013, 572, 2, "#d0674a"], [1040, 600, 2, "#b090a0"], [988, 628, 2, "#998877"],
];
const lifeYears = [1800, 1840, 1880, 1920, 1951, 1955, 1959, 1963, 1967, 1971, 1975, 1979, 1983, 1987, 1991, 1995, 1999, 2003, 2007, 2011, 2015];

const LifeChart = () => (
  <ChartSvg viewBox="0 0 334 267">
    <Label x="22" y="21" $size={8} $fill="#8f959e">平均寿命</Label>
    <path d="M40.700 29V238.700H282" fill="none" stroke="#7f868f" strokeWidth="0.700" />
    {[0, 20, 40, 60, 80, 100].map((v) => (
      <Label key={v} x="38" y={240.700 - v * 2.097} $size={5} $fill="#aab" $anchor="end">{v} 岁</Label>
    ))}
    {[["300 $", 40.700], ["1,000 $", 90], ["10,000 $", 186], ["100,000 $", 282]].map(([t, x]) => (
      <Label key={t} x={x} y="248" $size={5} $fill="#aab" $anchor="middle">{t}</Label>
    ))}
    <Label x="161" y="259" $size={8} $fill="#8f959e" $anchor="middle">人均收入</Label>
    <Label x="213" y="155" $size={7} $fill="#a0a6ae" $anchor="middle">1800</Label>
    {lifeBubbles.map(([x, y, r, c], i) => (
      <circle key={i} cx={(x - 851) / 1.867} cy={y / 3 - 42} r={r} fill={c} opacity="0.85" />
    ))}
    {lifeYears.map((y, i) => (
      <Label key={y} x="313" y={12 + i * 11.350} $size={6} $fill="#6a727d" $anchor="middle">{y}</Label>
    ))}
    <circle cx="326" cy="12" r="3" fill="#d8d8d8" />
    <circle cx="326" cy="250" r="5" fill="none" stroke="#6a727d" strokeWidth="0.800" />
    <path d="M324.500 248v4M327.500 248v4" stroke="#6a727d" strokeWidth="0.800" />
  </ChartSvg>
);

/* ---------- row 3 ---------- */

// silver dots, coords from the 1.867x / 3x crop
const brushDots = [
  [211, 245, 8], [259, 231, 4], [247, 150, 2], [104, 210, 2], [131, 200, 2], [183, 201, 2], [227, 200, 2], [101, 243, 3], [46, 262, 2],
  [45, 283, 2], [192, 268, 5], [215, 285, 3], [177, 297, 4], [146, 302, 2], [162, 301, 2], [206, 316, 3], [177, 330, 4], [177, 347, 3],
  [96, 346, 2], [132, 362, 2], [154, 359, 2], [176, 363, 2], [195, 391, 6], [143, 411, 4], [161, 406, 2], [174, 407, 2], [124, 409, 2],
  [90, 397, 2], [58, 423, 2], [90, 420, 2], [218, 345, 3], [230, 345, 2], [218, 360, 3], [228, 360, 5], [245, 345, 2], [255, 355, 2],
  [262, 320, 2], [275, 318, 2], [292, 267, 2], [298, 240, 3], [281, 205, 2], [301, 205, 2], [320, 168, 2], [333, 180, 2], [279, 300, 2],
  [288, 313, 2], [300, 325, 2], [268, 342, 2], [270, 360, 2], [258, 386, 2], [237, 391, 2], [226, 386, 3],
];

const goldBars = [611, 602, 593, 583, 583, 577, 577, 575];
const barNames = ["徐州", "邯郸", "无锡", "南京", "台州", "常州", "苏州", "温州"];

const BrushChart = () => (
  <ChartSvg viewBox="0 0 334 267">
    <path d="M0 12L30 0H200L193 6 166 33 141 46 124 59 130 62 150 66 132 86 145 101 150 130 120 267H0Z" fill="#323c48" stroke="#222a33" strokeWidth="0.700" />
    <path d="M0 50L30 40 60 30 80 55 110 45M30 40L40 110 90 130M60 60L100 100 120 90M0 100L40 110" fill="none" stroke="#222a33" strokeWidth="0.600" />
    <rect x="103" y="98" width="34" height="20" fill="#1c1f24" opacity="0.7" />
    {brushDots.map(([x, y, r], i) => (
      <circle key={i} cx={(x - 26) / 1.867} cy={y / 3 - 44} r={Math.max(1.600, r * 0.72)} fill="#c2d0de" opacity="0.85" />
    ))}
    <circle cx="104" cy="98" r="2" fill="#ddb926" />
    <circle cx="121" cy="94" r="2" fill="#ddb926" />
    <Label x="167" y="8" $size={7} $fill="#eee" $anchor="middle">全国主要城市 PM 2.5</Label>
    <Label x="167" y="19" $size={6.500} $fill="#878d96" $anchor="middle">data from PM25.in</Label>
    <ToolIcons x={288} y={5} s={0.900} />
    <Label x="270" y="27" $size={7} $fill="#ddd" $anchor="middle">平均 63.5750</Label>
    <Label x="203" y="38" $size={6.500} $fill="#ccc">TOP 20</Label>
    {[0, 10, 20, 30, 40, 50, 60, 70, 80].map((v, i) => (
      <Label key={v} x={215 + i * 12.500} y="46" $size={5} $fill="#bbb" $anchor="middle">{v}</Label>
    ))}
    {goldBars.map((z, i) => (
      <g key={i}>
        <rect x="215" y={48.400 + i * 6.670} width={(z - 427) / 1.867} height="5.300" fill="#ddb926" />
        <Label x="212" y={53.200 + i * 6.670} $size={5.500} $fill="#ddd" $anchor="end">{barNames[i]}</Label>
      </g>
    ))}
  </ChartSvg>
);

const AirMapColored = () => {
  const palette = ["#50a3ba", "#eac736", "#8fb56c", "#50a3ba", "#c9c04a"];
  return (
    <ChartSvg viewBox="27 120 1002 800">
      <ChinaMap />
      {cities.map(([x, y, r], i) => (
        <circle
          key={i}
          cx={toMapX(x)}
          cy={toMapY(y)}
          r="9"
          fill={i === 0 ? "#d94e5d" : r > 7 ? "#e08a3c" : palette[i % palette.length]}
          opacity="0.85"
        />
      ))}
      <Label x="530" y="143" $size={18} $fill="#e4e4e4" $anchor="middle">全国主要城市空气质量</Label>
      <Label x="530" y="177" $size={17} $fill="#8c929b" $anchor="middle">data from PM25.in</Label>
    </ChartSvg>
  );
};

const nutrientDots = [
  [213, 283], [131, 310], [157, 330], [161, 346], [143, 371], [197, 398], [188, 403], [151, 432], [143, 445], [177, 466], [197, 472], [187, 485], [213, 505],
];

const NutrientsChart = () => (
  <ChartSvg viewBox="0 0 334 267" $bg="#2c343c">
    <Label x="23" y="22" $size={7} $fill="#bbb">calcium</Label>
    <path d="M34 28V267" stroke="#777" strokeWidth="0.800" />
    {[["2.5", 28], ["2", 71], ["1.5", 113]].map(([t, y]) => (
      <Label key={t} x="30" y={y} $size={5.500} $fill="#bbb" $anchor="end">{t}</Label>
    ))}
    {nutrientDots.map(([x, y], i) => (
      <circle key={i} cx={(x - 35) / 1.867} cy={y / 3 - 44} r="2.200" fill="#7a3024" />
    ))}
    <circle cx={(305 - 35) / 1.867} cy={500 / 3 - 44} r="2.800" fill="#4b1414" />
  </ChartSvg>
);

const GrayChart = () => <ChartSvg viewBox="0 0 334 267" $bg="#c1c1c1" />;

/* ---------- page ---------- */

const LogoMark = () => (
  <svg width="32" height="32" viewBox="0 0 32 32">
    <circle cx="16" cy="16" r="16" fill="#b5304d" />
    <circle cx="13" cy="15" r="7.500" fill="#fff" />
    <path d="M19 20.500l5 3" stroke="#e8c4cc" strokeWidth="1.200" />
    <circle cx="24.500" cy="23.500" r="1.300" fill="#e8c4cc" />
  </svg>
);

const navItems = [
  { label: "首页" },
  { label: "文档", caret: true },
  { label: "作品", caret: true, active: true },
  { label: "下载", caret: true },
  { label: "GitHub" },
  { label: "2.0" },
  { label: "EN" },
];

const galleryItems = [
  { title: "气泡图", chart: <BubbleChart /> },
  { title: "全国主要城市空气质量 - 百度地图", chart: <BaiduMap /> },
  { title: "全国主要城市空气质量", chart: <AirMap /> },
  { title: "Prices and Earnings 2012", chart: <PricesChart /> },
  { title: "Anscombe's quartet", chart: <AnscombeChart /> },
  { title: "Scatter Aqi Color", chart: <AqiChart /> },
  { title: "大规模散点图", chart: <LargeScatter />, hover: true },
  { title: "各国人均寿命与GDP关系演变", chart: <LifeChart /> },
  { title: "Scatter Map Brush", chart: <BrushChart /> },
  { title: "全国主要城市空气质量", chart: <AirMapColored /> },
  { title: "Scatter Nutrients", chart: <NutrientsChart /> },
  { title: "Master Painter Color Choices Throughout His...", chart: <GrayChart /> },
];

const App = () => (
  <Page>
    <GlobalStyle />
    <Navbar>
      <Logo>
        <LogoMark />
        <LogoText>ECHARTS</LogoText>
      </Logo>
      <NavLinks>
        {navItems.map((item) => (
          <NavLink key={item.label} $active={item.active}>
            {item.label}
            {item.caret && <Caret />}
          </NavLink>
        ))}
      </NavLinks>
    </Navbar>
    <Body>
      <Sidebar>
        {sideMenu.map(([label, icon], i) => (
          <SideItem key={label} $active={i === 0}>
            <IconRing $active={i === 0}>
              <svg viewBox="0 0 32 32">{sideIcons[icon]}</svg>
            </IconRing>
            <SideLabel>{label}</SideLabel>
          </SideItem>
        ))}
      </Sidebar>
      <Main>
        <Rule />
        <Grid>
          {galleryItems.map((item, i) => (
            <Card key={i}>
              <CardTitle $hover={item.hover}>{item.title}</CardTitle>
              {item.chart}
            </Card>
          ))}
        </Grid>
      </Main>
    </Body>
    <StatusBubble>echarts.baidu.com/demo.html#scatter-large</StatusBubble>
    <BottomFade />
  </Page>
);

export default App;
